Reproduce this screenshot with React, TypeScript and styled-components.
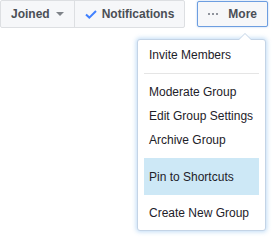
import React from "react";
import styled, { createGlobalStyle } from "styled-components";

const GlobalStyle = createGlobalStyle`
  html, body {
    margin: 0;
    padding: 0;
    background: #fff;
    font-family: "Liberation Sans", Arial, Helvetica, sans-serif;
  }
`;

const Toolbar = styled.div`
  position: relative;
  display: flex;
  align-items: flex-start;
  width: 275px;
  height: 240px;
`;

const Group = styled.div`
  display: flex;
  height: 28px;
  border: 1px solid #dddfe2;
  border-radius: 2px;
  background: #f6f7f9;
  box-sizing: border-box;
`;

const Button = styled.button<{ $gap?: number; $divider?: boolean }>`
  display: flex;
  align-items: center;
  gap: ${({ $gap }) => $gap ?? 5}px;
  height: 100%;
  padding: 0 10px;
  border: none;
  border-left: ${({ $divider }) => ($divider ? "1px solid #dddfe2" : "none")};
  background: transparent;
  font-family: "Liberation Sans", Arial, Helvetica, sans-serif;
  font-size: 12px;
  font-weight: bold;
  color: #4b4f56;
  cursor: pointer;
`;

const MoreButton = styled(Button)`
  height: 26px;
  margin: 1px 0 0 12px;
  border: 1px solid #6d9ee0;
  border-radius: 2px;
  background: #f6f7f9;
  box-shadow: 0 0 2px rgba(90, 150, 230, 0.5);
`;

const Menu = styled.div`
  position: absolute;
  top: 39px;
  left: 137px;
  width: 129px;
  box-sizing: border-box;
  padding: 3px 6px 5px;
  background: #fff;
  border: 1px solid #c4d4e6;
  border-radius: 3px;
  box-shadow: 0 0 4px 1px rgba(120, 180, 235, 0.45);
`;

const Arrow = styled.div`
  position: absolute;
  top: -7px;
  right: 13px;
  width: 0;
  height: 0;
  border-left: 7px solid transparent;
  border-right: 7px solid transparent;
  border-bottom: 7px solid #c4d4e6;

  &::after {
    content: "";
    position: absolute;
    left: -6px;
    top: 1px;
    border-left: 6px solid transparent;
    border-right: 6px solid transparent;
    border-bottom: 6px solid #fff;
  }
`;

const Item = styled.div<{ $active?: boolean }>`
  height: ${({ $active }) => ($active ? "37px" : "24px")};
  margin: ${({ $active }) => ($active ? "6px 0" : "0")};
  display: flex;
  align-items: center;
  padding: 0 5px;
  font-size: 12px;
  color: #1d2129;
  background: ${({ $active }) => ($active ? "#cde8f6" : "transparent")};
  white-space: nowrap;
`;

const Separator = styled.div`
  height: 1px;
  margin: 6px 0;
  background: #e5e5e5;
`;

const Caret = () => (
  <svg width="8" height="4" viewBox="0 0 8 4">
    <path d="M0 0 L8 0 L4 4 Z" fill="#7f8389" />
  </svg>
);

const Check = () => (
  <svg width="12" height="9" viewBox="0 0 12 9">
    <path d="M1 4.5 L4.3 7.6 L11 1" fill="none" stroke="#4080ff" strokeWidth="2" />
  </svg>
);

const Dots = () => (
  <svg width="10" height="2" viewBox="0 0 10 2">
    <rect x="0" y="0" width="2" height="2" fill="#90949c" />
    <rect x="4" y="0" width="2" height="2" fill="#90949c" />
    <rect x="8" y="0" width="2" height="2" fill="#90949c" />
  </svg>
);

export default function App() {
  return (
    <>
      <GlobalStyle />
      <Toolbar>
        <Group>
          <Button $gap={6}>
            Joined <Caret />
          </Button>
          <Button $divider>
            <Check />
            Notifications
          </Button>
        </Group>
        <MoreButton $gap={10}>
          <Dots />
          More
        </MoreButton>
        <Menu>
          <Arrow />
          <Item>Invite Members</Item>
          <Separator />
          <Item>Moderate Group</Item>
          <Item>Edit Group Settings</Item>
          <Item>Archive Group</Item>
          <Item $active>Pin to Shortcuts</Item>
          <Item>Create New Group</Item>
        </Menu>
      </Toolbar>
    </>
  );
}
